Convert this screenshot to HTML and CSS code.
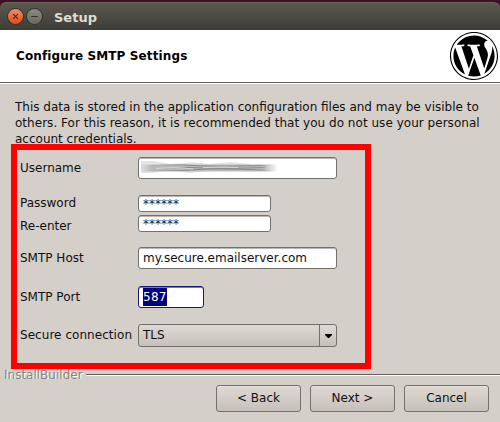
FILE: index.html
```html
<!DOCTYPE html>
<html lang="en">
<head>
<meta charset="utf-8">
<title>Setup</title>
<link rel="stylesheet" href="styles.css">
</head>
<body>
<div class="window">
  <header class="titlebar">
    <span class="control close"><svg viewBox="0 0 16 16"><path d="M5.500 5.500l5 5M10.500 5.500l-5 5"/></svg></span>
    <span class="control minimize"><svg viewBox="0 0 16 16"><path d="M4.500 8h7"/></svg></span>
    <span class="title">Setup</span>
  </header>
  <section class="banner">
    <h1>Configure SMTP Settings</h1>
    <svg class="logo" viewBox="0 0 122.520 122.523"><circle cx="61.260" cy="61.260" r="61.260" fill="#fff"/><path d="M8.708 61.260c0 20.802 12.089 38.779 29.619 47.298L13.258 39.872c-2.916 6.536-4.550 13.769-4.550 21.388zM96.740 58.608c0-6.495-2.333-10.993-4.334-14.494-2.664-4.329-5.161-7.995-5.161-12.324 0-4.831 3.664-9.328 8.825-9.328.233 0 .454.029.681.042-9.350-8.566-21.807-13.796-35.489-13.796-18.360 0-34.513 9.420-43.910 23.688 1.233.037 2.395.063 3.382.063 5.497 0 14.006-.667 14.006-.667 2.833-.167 3.167 3.994.337 4.329 0 0-2.847.335-6.015.501l19.138 56.925 11.501-34.493-8.188-22.434c-2.830-.166-5.511-.501-5.511-.501-2.832-.166-2.500-4.496.332-4.329 0 0 8.679.667 13.843.667 5.496 0 14.006-.667 14.006-.667 2.835-.167 3.168 3.994.337 4.329 0 0-2.853.335-6.015.501l18.992 56.494 5.242-17.517c2.272-7.269 4.001-12.490 4.001-16.989zM62.184 65.857l-15.768 45.819c4.708 1.384 9.687 2.141 14.846 2.141 6.120 0 11.989-1.058 17.452-2.979-.141-.225-.269-.464-.374-.724zM107.376 36.046c.226 1.674.354 3.471.354 5.404 0 5.333-.996 11.328-3.996 18.824l-16.053 46.413c15.624-9.111 26.133-26.038 26.133-45.426.001-9.137-2.333-17.729-6.438-25.215zM61.262 0C27.483 0 0 27.481 0 61.260c0 33.783 27.483 61.263 61.262 61.263 33.778 0 61.265-27.480 61.265-61.263C122.526 27.481 95.040 0 61.262 0zm0 119.715c-32.230 0-58.453-26.223-58.453-58.455 0-32.230 26.222-58.451 58.453-58.451 32.229 0 58.450 26.221 58.450 58.451 0 32.232-26.221 58.455-58.450 58.455z"/></svg>
  </section>
  <main>
    <p class="intro">This data is stored in the application configuration files and may be visible to<br><span class="wide">others. For this reason, it is recommended that you do not use your personal</span><br>account credentials.</p>
    <form class="settings">
      <div class="row username"><span class="label">Username</span><span class="field"><svg class="smudge" viewBox="0 0 137 13">
        <defs>
          <linearGradient id="fade"><stop offset="0" stop-color="#ddd"/><stop offset=".08" stop-color="#bbb"/><stop offset=".9" stop-color="#bbb"/><stop offset="1" stop-color="#fff"/></linearGradient>
          <linearGradient id="line"><stop offset="0" stop-color="#bbb"/><stop offset=".3" stop-color="#858585"/><stop offset=".88" stop-color="#8c8c8c"/><stop offset="1" stop-color="#fff"/></linearGradient>
        </defs>
        <path fill="#e4e4e4" d="M0 0h12l18 3 22-2 16 2 22-2 20 2v6l-45 1-15 2-22-3-16 3H0z"/>
        <path fill="url(#fade)" d="M0 3.500h137v7H0z"/>
        <path fill="none" stroke="url(#line)" d="M8 5q25-2 45-.5t82-.4M8 9q32 1 50-.5t75 1M20 7q25-1 45 0t60-.6"/>
        <path fill="none" stroke="#d8d8d8" d="M15 7.500q20-2 37 .5M62 6.500q20-1 35 0"/>
      </svg></span></div>
      <div class="row password"><span class="label">Password</span><span class="field short">******</span></div>
      <div class="row reenter"><span class="label">Re-enter</span><span class="field short">******</span></div>
      <div class="row host"><span class="label">SMTP Host</span><span class="field">my.secure.emailserver.com</span></div>
      <div class="row port"><span class="label">SMTP Port</span><span class="field focus"><span class="selected">587</span></span></div>
      <div class="row secure"><span class="label wide">Secure connection</span><span class="field combo"><span class="value">TLS</span><span class="arrow"><svg width="7" height="4" viewBox="0 0 7 4"><path d="M0 0h7v1L4 4H3L0 1z"/></svg></span></span></div>
    </form>
  </main>
  <div class="separator"><span>InstallBuilder</span></div>
  <footer><button>&lt; Back</button><button>Next &gt;</button><button>Cancel</button></footer>
</div>
</body>
</html>
```
FILE: styles.css
```css
* { box-sizing: border-box; }
body {
  margin: 0;
  background: #3d1028;
  color: #111;
  font: 12px/16px "DejaVu Sans", sans-serif;
}
.window { height: 422px; padding-top: 2px; overflow: hidden; display: flex; flex-direction: column; }
.titlebar {
  height: 28px;
  flex: none;
  display: flex;
  align-items: center;
  padding: 0 0 0 8px;
  border-top: 1px solid #68665c;
  border-radius: 6px 6px 0 0;
  background: linear-gradient(#5b584e, #3d3c37);
}
.control {
  width: 15px;
  height: 15px;
  margin-right: 4px;
  border-radius: 50%;
  box-shadow: 0 0 0 1px #35332e;
}
.control svg { display: block; width: 15px; height: 15px; fill: none; stroke: #3a2d25; stroke-width: 1.1; }
.close { background: linear-gradient(#f58a65, #df4b1c); }
.minimize { background: linear-gradient(#8b8981, #6b6962); }
.title { margin: 2px 0 0 8px; color: #e0dcd2; font-weight: bold; font-size: 13px; }
.banner {
  height: 54px;
  flex: none;
  display: flex;
  justify-content: space-between;
  align-items: flex-start;
  padding: 2px 2px 0 16px;
  background: #fff;
  border-bottom: 1px solid #fff;
  box-shadow: inset 0 -1px #625f5b;
}
h1 { margin: 16px 0 0; font-size: 12px; line-height: 16px; letter-spacing: .12px; color: #000; }
.logo { width: 48px; height: 48px; }
main { background: #d4cfc8; height: 285px; flex: none; padding: 15px 11px 0; }
.intro { margin: 0 0 -3px 4px; white-space: nowrap; }
.wide { letter-spacing: .03px; }
.settings { width: 360px; height: 225px; border: 6px solid #f00; padding: 7px 0 0 3px; margin: 0; }
.row { display: flex; align-items: flex-start; height: 22px; }
.label { width: 118px; flex: none; line-height: 22px; white-space: nowrap; }
.field {
  display: block;
  width: 199px;
  height: 22px;
  padding: 1px 4px;
  line-height: 18px;
  background: #fff;
  border: 1px solid #72716b;
  border-radius: 3px;
  box-shadow: inset 0 1px #b9b7b3;
}
.smudge {
  display: block;
  width: 137px;
  height: 13px;
  margin: 2px 0 0 -2px;
  filter: blur(.5px);
}
.password { margin-top: 16px; height: 20px; }
.reenter { height: 17px; }
.short { width: 133px; height: 17px; line-height: 14px; color: #222; }
.password .label { line-height: 16px; }
.host { margin-top: 15px; }
.port { margin-top: 17px; }
.focus { width: 66px; border-color: #171785; box-shadow: inset 0 1px #7777b5; }
.selected { display: inline-block; width: 24px; height: 18px; letter-spacing: .3px; background: #000080; color: #fff; }
.secure { margin-top: 16px; height: 23px; }
.secure .label { letter-spacing: .05px; }
.combo { height: 23px; display: flex; padding: 0; background: linear-gradient(#ded9d2, #c5c0b9); box-shadow: none; }
.value { flex: 1; padding-left: 4px; line-height: 21px; }
.arrow { width: 17px; display: flex; align-items: center; justify-content: center; border-left: 1px solid #72716b; }
.separator {
  height: 10px;
  flex: none;
  display: flex;
  align-items: flex-start;
  background: #d4cfc8;
  padding-left: 4px;
}
.separator span { margin-top: -2px; color: #88857f; text-shadow: 1px 1px #fff; }
.separator::after { content: ""; flex: 1; height: 2px; margin: 5px 0 0 3px; background: linear-gradient(#625f5b 50%, #fff 50%); }
footer { flex: 1; display: flex; justify-content: flex-end; gap: 9px; padding: 6px 11px 0 0; background: #d4cfc8; }
button {
  width: 85px;
  height: 27px;
  padding: 0 0 2px;
  border: 1px solid #72716b;
  border-radius: 3px;
  background: linear-gradient(#ded9d2, #c5c0b9);
  box-shadow: inset 0 1px #e4e0da;
  color: #111;
  font: inherit;
}
```
